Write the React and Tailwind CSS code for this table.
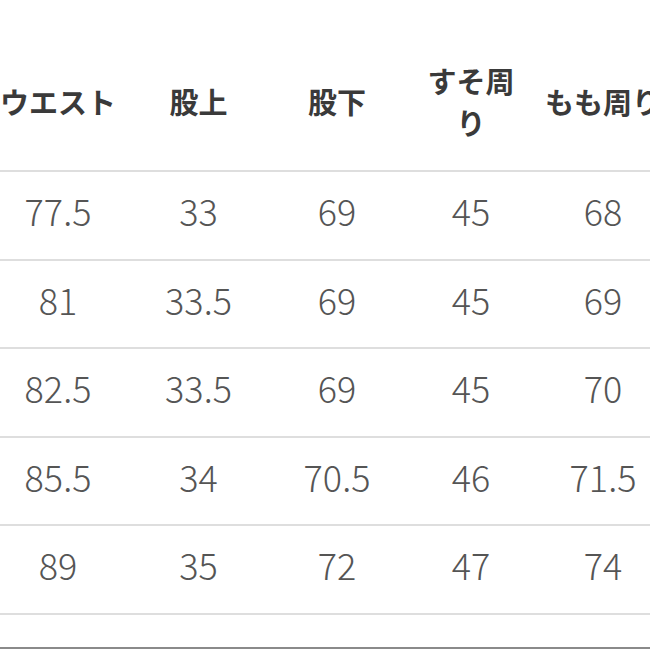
// --- Size chart table --- //
const headers = ["ウエスト", "股上", "股下", "すそ周り", "もも周り"]

const rows = [
    ["77.5", "33", "69", "45", "68"],
    ["81", "33.5", "69", "45", "69"],
    ["82.5", "33.5", "69", "45", "70"],
    ["85.5", "34", "70.5", "46", "71.5"],
    ["89", "35", "72", "47", "74"],
]

const cols = "grid grid-cols-[140px_141px_136px_132px_132px]"

function App() {
    return (
        <main className="w-[650px] h-[650px] overflow-hidden bg-white">
            <div className="-ml-[12px] w-[681px]" style={{ fontFamily: '"Noto Sans CJK JP", "Noto Sans", sans-serif' }}>
                {/* ---- HEADER ---- */}
                <div className={cols + " h-[170px] pt-[32px] items-center text-[29px] font-bold text-[#3a3a3a] leading-[42px]"}>
                    {headers.map((h, i) => (
                        <div key={i} className="flex justify-center text-center">
                            <span className={i == 3 ? "max-w-[92px]" : "whitespace-nowrap"}>{h}</span>
                        </div>
                    ))}
                </div>
                {/* ---- ROWS ---- */}
                {rows.map((row, r) => (
                    <div key={r} className={cols + " h-[88.5px] border-t-2 border-[#dedede] items-center text-[36px] font-light text-[#555555] pb-[10px]"}>
                        {row.map((v, i) => (
                            <div key={i} className="text-center">{v}</div>
                        ))}
                    </div>
                ))}
                <div className="h-[34px] border-t-2 border-[#dedede]"></div>
                <div className="border-t-2 border-[#8a8a8a]"></div>
            </div>
        </main>
    )
}

export default App
